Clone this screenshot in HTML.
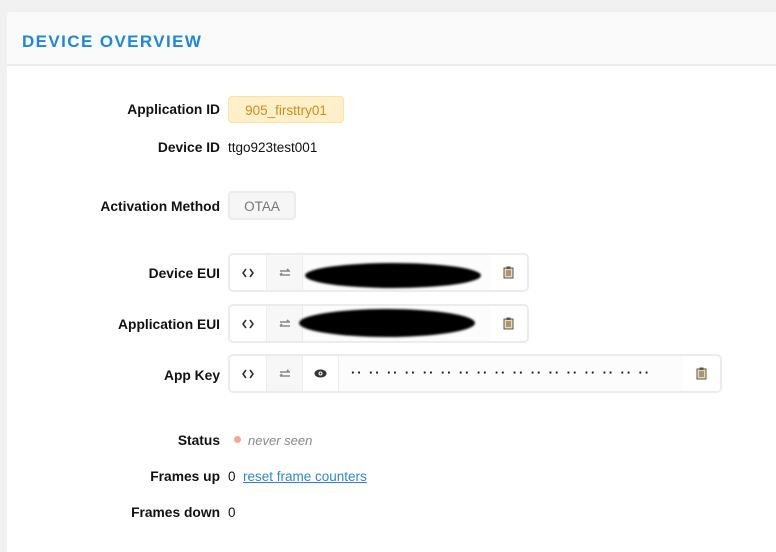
<!DOCTYPE html>
<html><head><style>
*{margin:0;padding:0;box-sizing:border-box}
body{width:776px;height:536px;background:#f1f1f1;font-family:"Liberation Sans",sans-serif;position:relative;overflow:hidden;font-size:13px;color:#111}
.card{position:absolute;left:7px;top:12px;width:780px;height:540px;background:#fff;border-radius:4px 0 0 0}
.hdr{position:absolute;left:7px;top:12px;width:780px;height:54px;background:#fafafa;border-bottom:2px solid #ececec;border-radius:4px 0 0 0}
.title{position:absolute;left:22px;top:32px;font-size:17px;font-weight:bold;letter-spacing:1.4px;color:#1e88d8}
.lbl{position:absolute;right:556px;font-weight:bold;font-size:13.8px;text-align:right;white-space:nowrap}
.val{position:absolute;left:228px;font-size:13.5px;white-space:nowrap}
.badge{position:absolute;border-radius:4px;text-align:center;font-size:13.5px}
.grp{position:absolute;left:228px;height:39px;border:2px solid #ececec;border-radius:5px;background:#fff;display:flex}
.seg{height:100%;border-right:1px solid #ececec;display:flex;align-items:center;justify-content:center;width:37px;flex:none}
.seg.g{background:#f7f7f7;width:36px}
.seg:last-child{border-right:none}
.mid{flex:1;background:#fcfcfc;position:relative}
.blob{position:absolute;background:#000;border-radius:50%;filter:blur(1px)}
</style></head><body>
<div class="card"></div>
<div class="hdr"></div>
<div class="title">DEVICE OVERVIEW</div>

<div class="lbl" style="top:102px">Application ID</div>
<div class="badge" style="left:228px;top:96px;width:116px;height:27px;line-height:27px;background:#fff0c9;border:1px solid #fbe2a6;color:#d08a1e">905_firsttry01</div>
<div class="lbl" style="top:140px">Device ID</div>
<div class="val" style="top:140px">ttgo923test001</div>
<div class="lbl" style="top:199px">Activation Method</div>
<div class="badge" style="left:228px;top:191px;width:68px;height:29px;line-height:27px;background:#f6f6f6;border:2px solid #ececec;color:#777">OTAA</div>

<div class="lbl" style="top:266px">Device EUI</div>
<div class="grp" style="top:253px;width:301px">
<div class="seg"><svg width="12" height="10" viewBox="0 0 12 10"><path d="M4 1L1 5l3 4M8 1l3 4-3 4" fill="none" stroke="#333" stroke-width="1.6"/></svg></div>
<div class="seg g"><svg width="12" height="10"><path d="M1 3h10M8 1l2 2M1 7h10M3 5L1 7" fill="none" stroke="#888" stroke-width="1.6"/></svg></div>
<div class="mid"><div class="blob" style="left:2px;top:8px;width:176px;height:25px"></div></div>
<div class="seg"><svg width="11" height="13"><rect x="1" y="2" width="9" height="10" fill="#f4d9a6" stroke="#555" stroke-width="1"/><path d="M3 5h5M3 7h5M3 9h5" stroke="#555"/><rect x="3.5" y="0.5" width="4" height="2.5" fill="#555"/></svg></div>
</div>

<div class="lbl" style="top:317px">Application EUI</div>
<div class="grp" style="top:304px;width:301px">
<div class="seg"><svg width="12" height="10" viewBox="0 0 12 10"><path d="M4 1L1 5l3 4M8 1l3 4-3 4" fill="none" stroke="#333" stroke-width="1.6"/></svg></div>
<div class="seg g"><svg width="12" height="10"><path d="M1 3h10M8 1l2 2M1 7h10M3 5L1 7" fill="none" stroke="#888" stroke-width="1.6"/></svg></div>
<div class="mid"><div class="blob" style="left:-4px;top:3px;width:176px;height:28px"></div></div>
<div class="seg"><svg width="11" height="13"><rect x="1" y="2" width="9" height="10" fill="#f4d9a6" stroke="#555" stroke-width="1"/><path d="M3 5h5M3 7h5M3 9h5" stroke="#555"/><rect x="3.5" y="0.5" width="4" height="2.5" fill="#555"/></svg></div>
</div>

<div class="lbl" style="top:368px">App Key</div>
<div class="grp" style="top:354px;width:494px">
<div class="seg"><svg width="12" height="10" viewBox="0 0 12 10"><path d="M4 1L1 5l3 4M8 1l3 4-3 4" fill="none" stroke="#333" stroke-width="1.6"/></svg></div>
<div class="seg g"><svg width="12" height="10"><path d="M1 3h10M8 1l2 2M1 7h10M3 5L1 7" fill="none" stroke="#888" stroke-width="1.6"/></svg></div>
<div class="seg" style="width:36px"><svg width="13" height="9"><ellipse cx="6.5" cy="4.5" rx="6" ry="4" fill="#333"/><circle cx="6.5" cy="4.5" r="2" fill="#fff"/><circle cx="6.5" cy="4.5" r="1" fill="#333"/></svg></div>
<div class="mid" style="font-size:13px;letter-spacing:1.9px;padding-left:12px;line-height:33px;color:#111;font-weight:bold">·· ·· ·· ·· ·· ·· ·· ·· ·· ·· ·· ·· ·· ·· ·· ·· ··</div>
<div class="seg"><svg width="11" height="13"><rect x="1" y="2" width="9" height="10" fill="#f4d9a6" stroke="#555" stroke-width="1"/><path d="M3 5h5M3 7h5M3 9h5" stroke="#555"/><rect x="3.5" y="0.5" width="4" height="2.5" fill="#555"/></svg></div>
</div>

<div class="lbl" style="top:433px">Status</div>
<div style="position:absolute;left:234px;top:436px;width:7px;height:7px;border-radius:50%;background:#f7a88b"></div>
<div class="val" style="left:248px;top:433px;font-style:italic;color:#888;font-size:13px">never seen</div>
<div class="lbl" style="top:469px">Frames up</div>
<div class="val" style="top:469px">0</div>
<div class="val" style="left:243px;top:469px;color:#2d86cf;text-decoration:underline">reset frame counters</div>
<div class="lbl" style="top:505px">Frames down</div>
<div class="val" style="top:505px">0</div>
</body></html>
